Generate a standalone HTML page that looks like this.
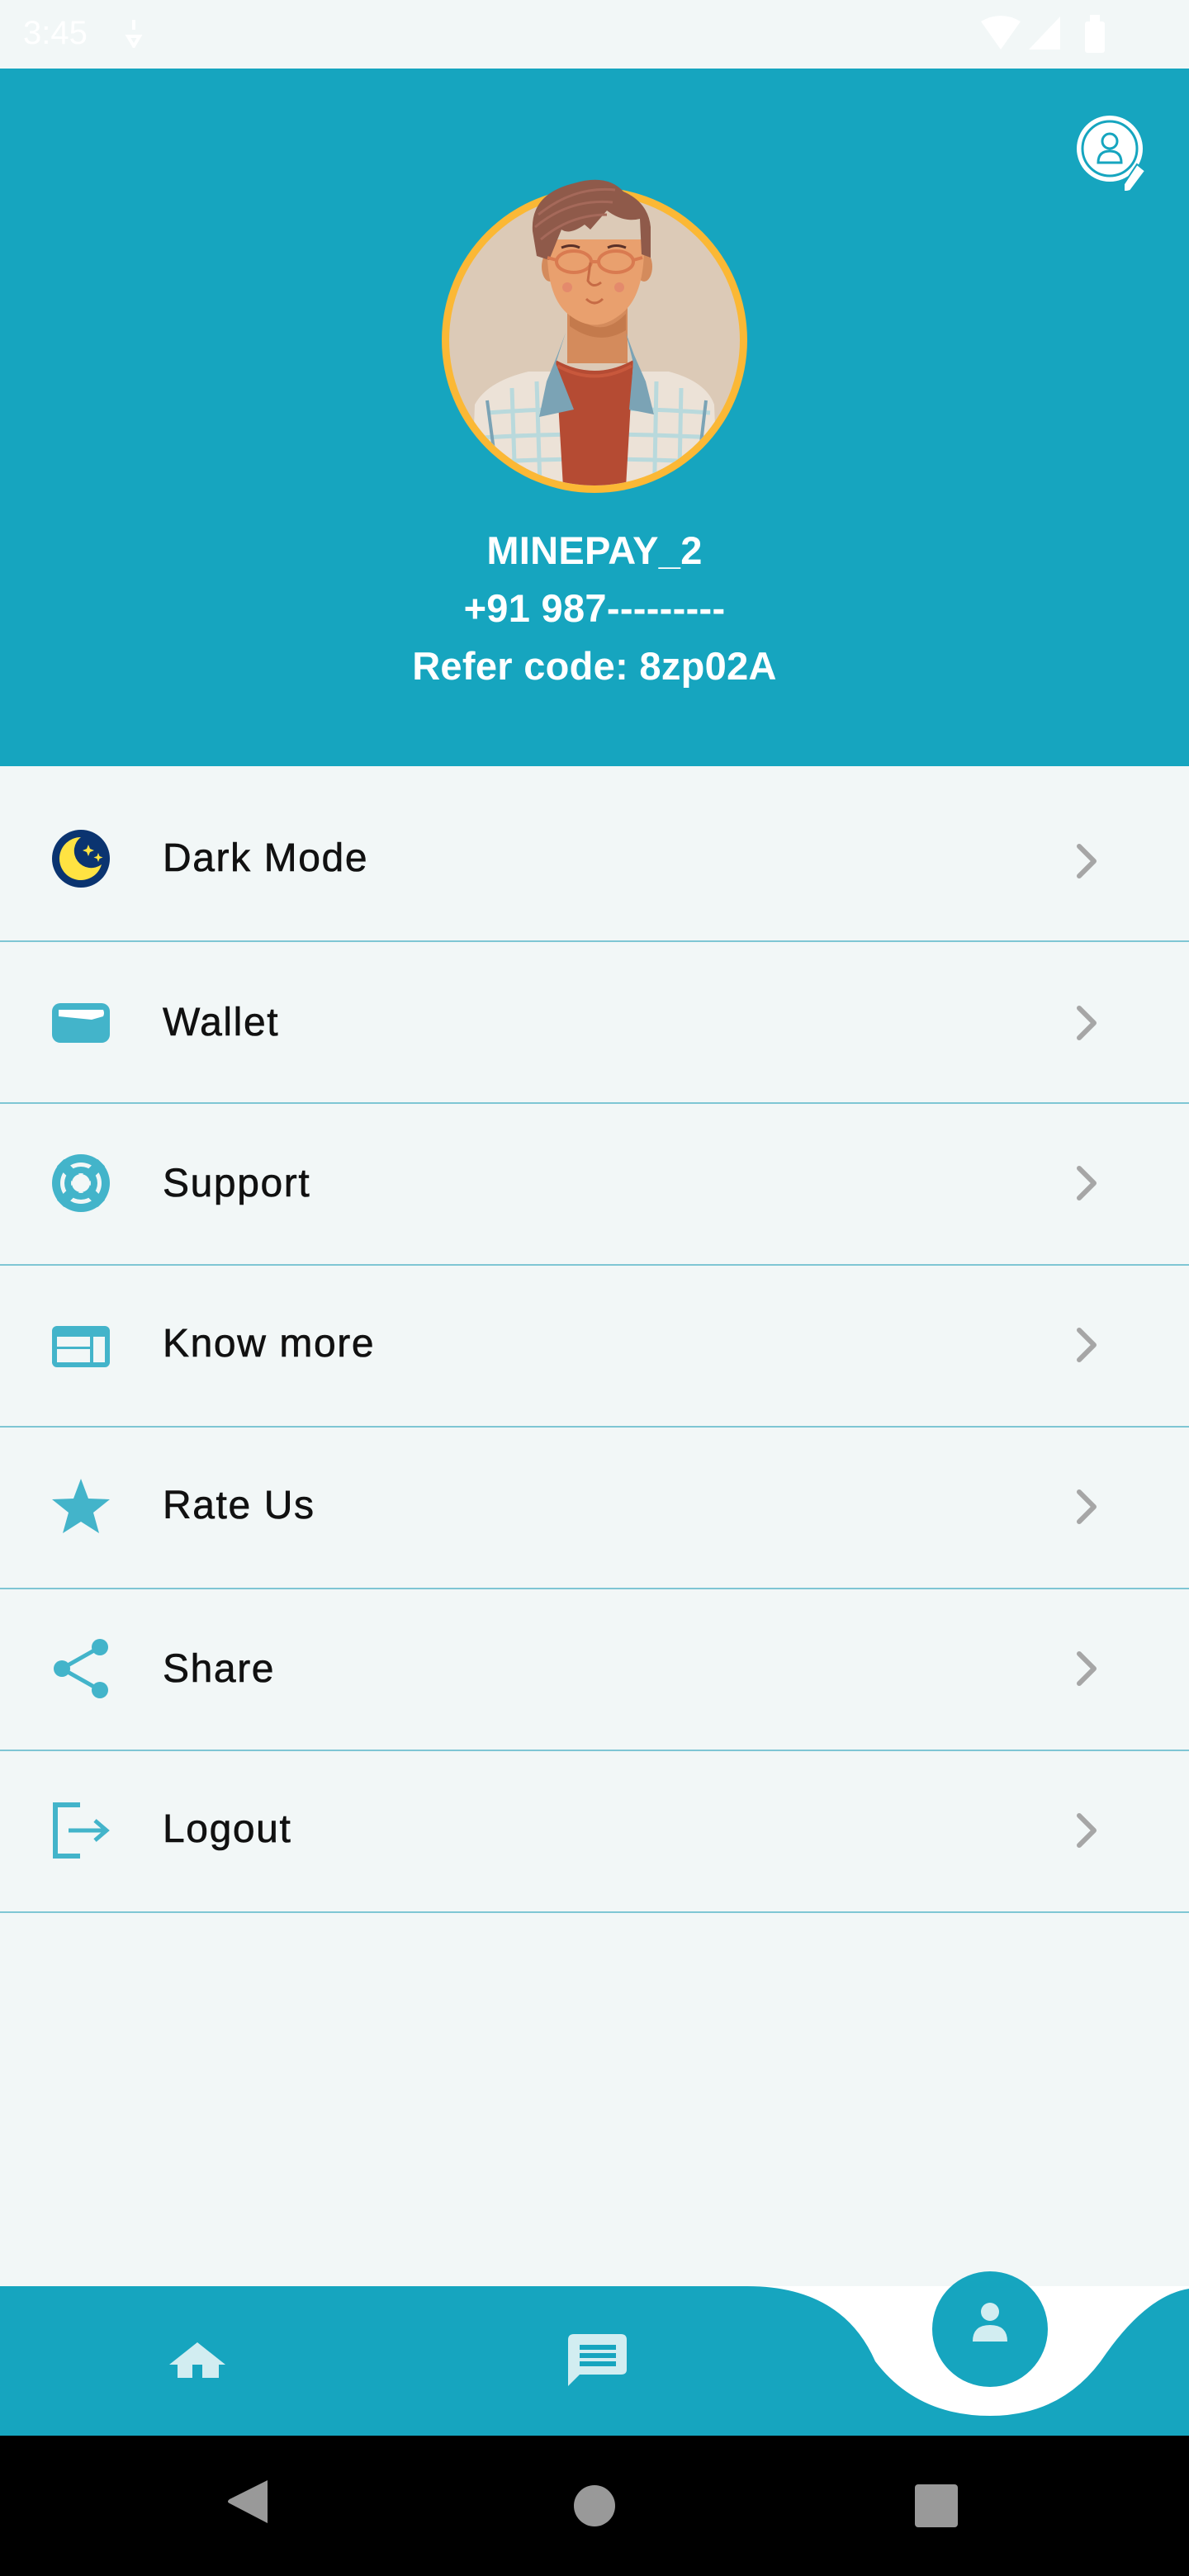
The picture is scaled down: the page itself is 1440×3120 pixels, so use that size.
<!DOCTYPE html>
<html><head><meta charset="utf-8">
<style>
*{margin:0;padding:0;box-sizing:border-box}
html,body{width:1440px;height:3120px;overflow:hidden;background:#f2f7f7;font-family:"Liberation Sans",sans-serif}
.status{position:absolute;left:0;top:0;width:1440px;height:83px;background:#f2f7f7}
.status .t{position:absolute;left:28px;top:18px;color:#fff;font-size:40px}
.header{position:absolute;left:0;top:83px;width:1440px;height:845px;background:#16a5bf}
.info{position:absolute;left:0;width:1440px;text-align:center;color:#fff;font-size:47px;font-weight:bold;letter-spacing:0.3px}
.row{position:absolute;left:0;width:1440px;border-bottom:2px solid #7fc6d4}
.row .lbl{position:absolute;left:197px;font-size:48px;color:#111;letter-spacing:1.6px;-webkit-text-stroke:0.6px #111}
.row svg.ic{position:absolute;left:63px}
.row svg.ch{position:absolute;left:1300px}
</style></head><body>
<div class="status"><div class="t">3:45</div>
<svg style="position:absolute;left:150px;top:22px" width="24" height="36" viewBox="0 0 24 36"><path d="M12 2 L12 14 M5 22 L12 34 L19 22 Z" stroke="#fff" stroke-width="4" fill="none"/></svg>
<svg style="position:absolute;left:1188px;top:18px" width="120" height="48" viewBox="0 0 120 48"><path d="M0 8 Q24 -6 48 8 L24 42 Z" fill="#fff"/><path d="M58 42 L96 2 L96 42 Z" fill="#fff"/></svg>
<div style="position:absolute;left:1314px;top:26px;width:24px;height:38px;background:#fff;border-radius:3px"></div>
<div style="position:absolute;left:1320px;top:18px;width:12px;height:10px;background:#fff"></div>
</div>
<div class="header"></div>
<svg style="position:absolute;left:1299px;top:135px" width="96" height="96" viewBox="0 0 96 96">
<circle cx="45" cy="45" r="40" fill="#fff"/><circle cx="45" cy="45" r="33" fill="none" stroke="#16a5bf" stroke-width="3"/>
<circle cx="45" cy="36" r="9" fill="none" stroke="#16a5bf" stroke-width="3"/>
<path d="M31 62 Q31 48 45 48 Q59 48 59 62 Z" fill="none" stroke="#16a5bf" stroke-width="3"/>
<path d="M78 64 L88 72 L70 96 L62 98 L62 88 Z" fill="#fff" stroke="#16a5bf" stroke-width="2"/>
</svg>
<!-- avatar -->
<svg style="position:absolute;left:530px;top:200px" width="380" height="400" viewBox="0 0 380 400">
<defs><clipPath id="c"><circle cx="190" cy="212" r="176"/></clipPath></defs>
<circle cx="190" cy="212" r="185" fill="#fbb835"/>
<circle cx="190" cy="212" r="176" fill="#dccab7"/>
<g clip-path="url(#c)">
<path d="M157 160 L157 240 L230 240 L230 160 Z" fill="#d48b5c"/>
<path d="M160 175 Q195 215 228 180 L228 200 Q195 220 160 195 Z" fill="#c47a4c"/>
<path d="M40 420 L45 290 Q60 262 110 250 L280 250 Q325 262 335 290 L340 420 Z" fill="#ece2d7"/>
<path d="M60 300 Q190 290 330 300 M55 330 Q190 322 335 330 M55 360 Q190 352 335 360 M90 270 L95 420 M120 262 L125 420 M265 262 L262 420 M295 270 L292 420" stroke="#b9d9dc" stroke-width="5" fill="none"/>
<path d="M143 236 Q190 262 237 236 L228 390 L152 390 Z" fill="#b54b33"/>
<path d="M145 243 Q190 268 235 243" stroke="#c8583c" stroke-width="4" fill="none"/>
<path d="M155 203 L145 230 L132 262 L123 305 L165 296 L143 240 Z" fill="#7ba3b5"/>
<path d="M228 203 L238 230 L252 262 L262 302 L232 296 L237 240 Z" fill="#7ba3b5"/>
<path d="M60 285 L68 345 M325 285 L318 345" stroke="#7ba3b5" stroke-width="4" fill="none"/>
</g>
<ellipse cx="136" cy="123" rx="10" ry="18" fill="#d48b5c"/>
<ellipse cx="250" cy="123" rx="10" ry="18" fill="#d48b5c"/>
<path d="M133 90 Q130 160 160 182 Q190 205 220 182 Q252 160 250 90 Z" fill="#e9a06e"/>
<path d="M115 80 Q112 35 165 22 Q205 10 225 32 Q255 45 258 75 L258 112 L247 108 L245 65 Q225 70 205 55 L185 78 L178 72 Q160 85 150 78 L135 115 L120 110 Z" fill="#8f5a4a"/>
<path d="M122 60 Q165 25 215 30 M118 75 Q160 40 212 45 M125 90 Q160 60 205 60" stroke="#a5695a" stroke-width="3" fill="none"/>
<ellipse cx="165" cy="117" rx="21" ry="13" fill="none" stroke="#d97a50" stroke-width="4"/>
<ellipse cx="216" cy="117" rx="21" ry="13" fill="none" stroke="#d97a50" stroke-width="4"/>
<path d="M186 117 L195 117 M144 115 L133 112 M237 115 L248 112" stroke="#d97a50" stroke-width="4"/>
<path d="M150 100 Q162 95 172 100 M206 100 Q216 95 228 100" stroke="#5a3128" stroke-width="3" fill="none"/>
<circle cx="157" cy="148" r="6" fill="#e48a6c"/><circle cx="220" cy="148" r="6" fill="#e48a6c"/>
<path d="M185 118 L182 140 Q188 150 198 142" stroke="#c66b45" stroke-width="3" fill="none"/>
<path d="M180 162 Q190 172 200 162" stroke="#c66b45" stroke-width="3" fill="none"/>
</svg>
<div class="info" style="top:639px">MINEPAY_2</div>
<div class="info" style="top:709px">+91 987---------</div>
<div class="info" style="top:779px">Refer code: 8zp02A</div>

<div class="row" style="top:928px;height:213px">
<svg class="ic" style="top:77px" width="70" height="70" viewBox="0 0 70 70"><circle cx="35" cy="35" r="35" fill="#0b3470"/><path d="M35 9 A26 26 0 1 0 60 42 A20 20 0 0 1 35 9 Z" fill="#ffe342"/><path d="M44 18 l2 5 5 2 -5 2 -2 5 -2 -5 -5 -2 5 -2z M56 28 l1.5 4 4 1.5 -4 1.5 -1.5 4 -1.5 -4 -4 -1.5 4 -1.5z" fill="#ffe342"/></svg>
<div class="lbl" style="top:84px">Dark Mode</div>
<svg class="ch" style="top:93px" width="40" height="44" viewBox="0 0 40 44"><path d="M7 4 L25 22 L7 40" stroke="#a6a6a6" stroke-width="6" fill="none" stroke-linecap="round" stroke-linejoin="round"/></svg>
</div>
<div class="row" style="top:1141px;height:196px">
<svg class="ic" style="top:74px" width="70" height="48" viewBox="0 0 70 48"><rect width="70" height="48" rx="10" fill="#43b4ca"/><path d="M8 8 L62 8 Q64 12 62 16 L48 20 L8 16 Z" fill="#fff"/></svg>
<div class="lbl" style="top:70px">Wallet</div>
<svg class="ch" style="top:76px" width="40" height="44" viewBox="0 0 40 44"><path d="M7 4 L25 22 L7 40" stroke="#a6a6a6" stroke-width="6" fill="none" stroke-linecap="round" stroke-linejoin="round"/></svg>
</div>
<div class="row" style="top:1337px;height:196px">
<svg class="ic" style="top:61px" width="70" height="70" viewBox="0 0 70 70"><circle cx="35" cy="35" r="35" fill="#43b4ca"/><circle cx="35" cy="35" r="25" fill="#f2f7f7"/><circle cx="35" cy="35" r="20" fill="#43b4ca"/><circle cx="35" cy="35" r="12" fill="#f2f7f7"/><g transform="rotate(45 35 35)"><path d="M35 0 L35 70 M0 35 L70 35" stroke="#43b4ca" stroke-width="12"/></g><circle cx="35" cy="35" r="11" fill="#f2f7f7"/></svg>
<div class="lbl" style="top:69px">Support</div>
<svg class="ch" style="top:74px" width="40" height="44" viewBox="0 0 40 44"><path d="M7 4 L25 22 L7 40" stroke="#a6a6a6" stroke-width="6" fill="none" stroke-linecap="round" stroke-linejoin="round"/></svg>
</div>
<div class="row" style="top:1533px;height:196px">
<svg class="ic" style="top:73px" width="70" height="50" viewBox="0 0 70 50"><rect width="70" height="50" rx="6" fill="#43b4ca"/><rect x="6" y="13" width="40" height="12" fill="#f2f7f7"/><rect x="6" y="28" width="40" height="16" fill="#f2f7f7"/><rect x="50" y="13" width="14" height="31" fill="#f2f7f7"/></svg>
<div class="lbl" style="top:67px">Know more</div>
<svg class="ch" style="top:74px" width="40" height="44" viewBox="0 0 40 44"><path d="M7 4 L25 22 L7 40" stroke="#a6a6a6" stroke-width="6" fill="none" stroke-linecap="round" stroke-linejoin="round"/></svg>
</div>
<div class="row" style="top:1729px;height:196px">
<svg class="ic" style="top:60px" width="70" height="70" viewBox="0 0 70 70"><path d="M35 2 L44 26 L70 27 L50 43 L57 68 L35 54 L13 68 L20 43 L0 27 L26 26 Z" fill="#43b4ca"/></svg>
<div class="lbl" style="top:67px">Rate Us</div>
<svg class="ch" style="top:74px" width="40" height="44" viewBox="0 0 40 44"><path d="M7 4 L25 22 L7 40" stroke="#a6a6a6" stroke-width="6" fill="none" stroke-linecap="round" stroke-linejoin="round"/></svg>
</div>
<div class="row" style="top:1925px;height:196px">
<svg class="ic" style="top:59px" width="70" height="74" viewBox="0 0 70 74"><circle cx="58" cy="11" r="10" fill="#43b4ca"/><circle cx="12" cy="37" r="10" fill="#43b4ca"/><circle cx="58" cy="63" r="10" fill="#43b4ca"/><path d="M58 11 L12 37 L58 63" stroke="#43b4ca" stroke-width="5" fill="none"/></svg>
<div class="lbl" style="top:69px">Share</div>
<svg class="ch" style="top:74px" width="40" height="44" viewBox="0 0 40 44"><path d="M7 4 L25 22 L7 40" stroke="#a6a6a6" stroke-width="6" fill="none" stroke-linecap="round" stroke-linejoin="round"/></svg>
</div>
<div class="row" style="top:2121px;height:196px">
<svg class="ic" style="top:62px" width="70" height="68" viewBox="0 0 70 68"><path d="M34 3 L4 3 L4 65 L34 65" stroke="#43b4ca" stroke-width="6" fill="none"/><path d="M20 34 L64 34 M52 22 L66 34 L52 46" stroke="#43b4ca" stroke-width="5" fill="none"/></svg>
<div class="lbl" style="top:67px">Logout</div>
<svg class="ch" style="top:74px" width="40" height="44" viewBox="0 0 40 44"><path d="M7 4 L25 22 L7 40" stroke="#a6a6a6" stroke-width="6" fill="none" stroke-linecap="round" stroke-linejoin="round"/></svg>
</div>

<svg style="position:absolute;left:0;top:2740px" width="1440" height="210" viewBox="0 0 1440 210">
<rect x="0" y="29" width="1440" height="181" fill="#16a5bf"/>
<path d="M905 29 Q1020 29 1060 120 Q1110 186 1199 186 Q1290 186 1340 110 Q1390 40 1440 32 L1440 29 Z" fill="#fff"/>
<circle cx="1199" cy="81" r="70" fill="#16a5bf"/>
<circle cx="1199" cy="60" r="11" fill="#d2edf1"/>
<path d="M1178 96 Q1178 76 1199 76 Q1220 76 1220 96 Z" fill="#d2edf1"/>
<path d="M239 97 L205 124 L215 124 L215 140 L233 140 L233 124 L245 124 L245 140 L265 140 L265 124 L273 124 Z" fill="#d2edf1"/>
<path d="M688 94 Q688 87 695 87 L752 87 Q759 87 759 94 L759 130 Q759 136 752 136 L702 136 L688 150 Z" fill="#d2edf1"/>
<rect x="702" y="100" width="44" height="6" fill="#16a5bf"/><rect x="702" y="110" width="44" height="6" fill="#16a5bf"/><rect x="702" y="120" width="44" height="6" fill="#16a5bf"/>
</svg>
<div style="position:absolute;left:0;top:2950px;width:1440px;height:170px;background:#000"></div>
<svg style="position:absolute;left:0;top:2990px" width="1440" height="90" viewBox="0 0 1440 90">
<path d="M324 14 L324 66 L278 42 Q274 40 278 37 Z" fill="#999"/>
<circle cx="720" cy="45" r="25" fill="#999"/>
<rect x="1108" y="19" width="52" height="52" rx="4" fill="#999"/>
</svg>
</body></html>
